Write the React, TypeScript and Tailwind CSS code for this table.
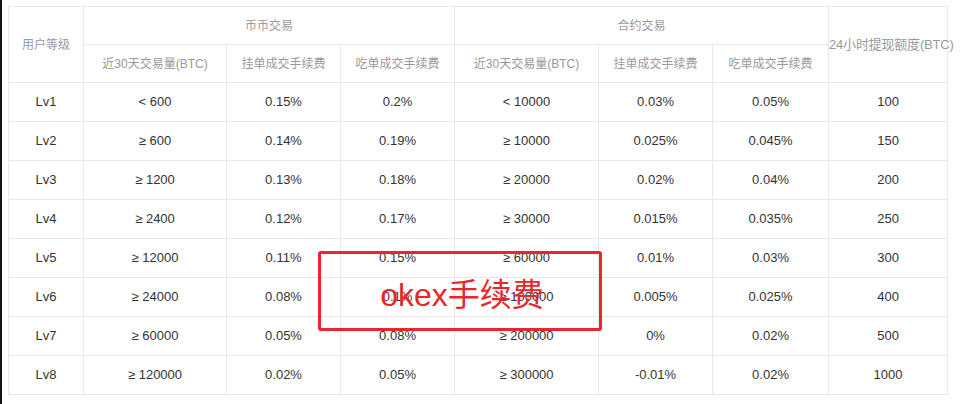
import React from 'react';

const rows = [
  ['Lv1', '< 600', '0.15%', '0.2%', '< 10000', '0.03%', '0.05%', '100'],
  ['Lv2', '≥ 600', '0.14%', '0.19%', '≥ 10000', '0.025%', '0.045%', '150'],
  ['Lv3', '≥ 1200', '0.13%', '0.18%', '≥ 20000', '0.02%', '0.04%', '200'],
  ['Lv4', '≥ 2400', '0.12%', '0.17%', '≥ 30000', '0.015%', '0.035%', '250'],
  ['Lv5', '≥ 12000', '0.11%', '0.15%', '≥ 60000', '0.01%', '0.03%', '300'],
  ['Lv6', '≥ 24000', '0.08%', '0.1%', '≥ 100000', '0.005%', '0.025%', '400'],
  ['Lv7', '≥ 60000', '0.05%', '0.08%', '≥ 200000', '0%', '0.02%', '500'],
  ['Lv8', '≥ 120000', '0.02%', '0.05%', '≥ 300000', '-0.01%', '0.02%', '1000'],
];

const widths = ['w-[75px]', 'w-[143px]', 'w-[114px]', 'w-[114px]', 'w-[144px]', 'w-[114px]', 'w-[116px]', 'w-[119px]'];

export default function App() {
  const cell = 'border border-[#e8e8e8] text-center p-0';
  return (
    <div
      className="relative flex h-[404px] w-[962px] bg-white"
      style={{ fontFamily: '"Liberation Sans", "Noto Sans CJK SC", sans-serif' }}
    >
      <div className="w-[2px] h-full bg-[#111]" />
      <div className="pl-[6px] pt-[6px]">
        <table className="border-collapse table-fixed w-[940px]">
          <colgroup>
            {widths.map((w, i) => (
              <col key={i} className={w} />
            ))}
          </colgroup>
          <thead>
            <tr className="h-[38px] text-[12px] text-[#999]">
              <th rowSpan={2} className={cell + ' font-normal'}>用户等级</th>
              <th colSpan={3} className={cell + ' font-normal'}>币币交易</th>
              <th colSpan={3} className={cell + ' font-normal'}>合约交易</th>
              <th rowSpan={2} className={cell + ' font-normal whitespace-nowrap text-[13px] tracking-[-0.2px]'}>
                24小时提现额度(BTC)
              </th>
            </tr>
            <tr className="h-[38px] text-[12px] text-[#999]">
              <th className={cell + ' font-normal'}>近30天交易量(BTC)</th>
              <th className={cell + ' font-normal'}>挂单成交手续费</th>
              <th className={cell + ' font-normal'}>吃单成交手续费</th>
              <th className={cell + ' font-normal'}>近30天交易量(BTC)</th>
              <th className={cell + ' font-normal'}>挂单成交手续费</th>
              <th className={cell + ' font-normal'}>吃单成交手续费</th>
            </tr>
          </thead>
          <tbody>
            {rows.map((r) => (
              <tr key={r[0]} className="h-[39px] text-[13px] text-[#333]">
                {r.map((c, j) => (
                  <td key={j} className={cell}>{c}</td>
                ))}
              </tr>
            ))}
          </tbody>
        </table>
      </div>

      {/* watermark box */}
      <div className="absolute left-[318px] top-[251px] w-[284px] h-[80px] border-[3px] border-[#e8262b] rounded-[3px] flex items-center justify-center">
        <span className="text-[#e8262b] text-[32px] leading-none mt-[8px] ml-[4px]">okex手续费</span>
      </div>
    </div>
  );
}
